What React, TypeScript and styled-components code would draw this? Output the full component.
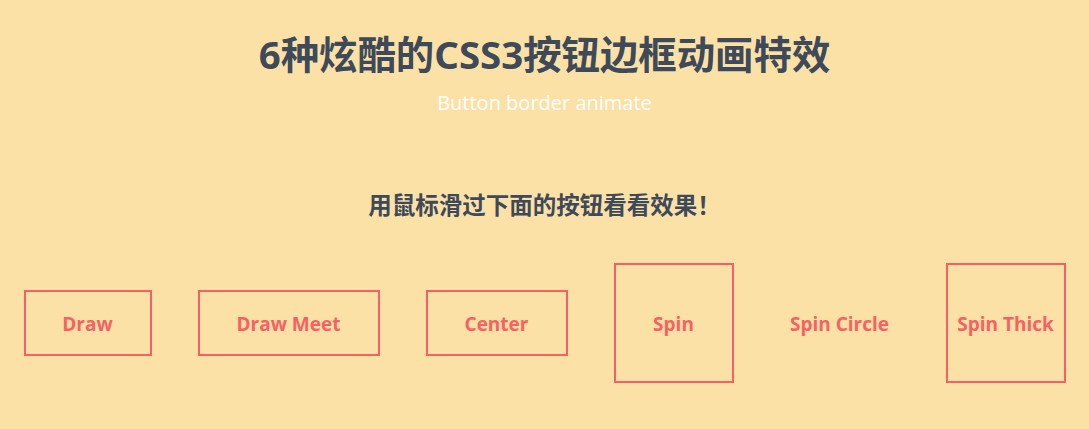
import React from "react";
import styled, { createGlobalStyle } from "styled-components";

const GlobalStyle = createGlobalStyle`
  html, body {
    margin: 0;
    padding: 0;
    background: #fce1a6;
  }
  body {
    font-family: "Open Sans", "Noto Sans CJK SC", sans-serif;
  }
`;

const Page = styled.div`
  display: flex;
  flex-direction: column;
  align-items: center;
  min-height: 429px;
  box-sizing: border-box;
  padding-top: 29px;
`;

const Title = styled.h1`
  margin: 0;
  font-family: "Noto Sans", "Noto Sans CJK SC", sans-serif;
  font-size: 38.4px;
  line-height: 50px;
  font-weight: 700;
  color: #3e4a59;
`;

const Subtitle = styled.p`
  margin: 11px 0 0;
  font-family: "Open Sans", sans-serif;
  font-size: 20px;
  line-height: 26px;
  font-weight: 400;
  color: #ffffff;
`;

const Hint = styled.h2`
  margin: 73px 0 0;
  font-family: "Noto Sans", "Noto Sans CJK SC", sans-serif;
  font-size: 23.5px;
  line-height: 32px;
  font-weight: 700;
  color: #3e4a59;
`;

const ButtonRow = styled.div`
  display: flex;
  align-items: center;
  justify-content: center;
  gap: 46px;
  margin-top: 42px;
`;

const Button = styled.button<{ $w: number; $h: number; $bordered?: boolean }>`
  box-sizing: border-box;
  width: ${(p) => p.$w}px;
  height: ${(p) => p.$h}px;
  display: flex;
  align-items: center;
  justify-content: center;
  padding: 2px 0 0;
  background: transparent;
  border: 2px solid ${(p) => (p.$bordered === false ? "transparent" : "#f86163")};
  color: #f86163;
  font-family: "Open Sans", sans-serif;
  font-size: 19px;
  font-weight: 700;
  cursor: pointer;
`;

const buttons = [
  { label: "Draw", w: 128, h: 66 },
  { label: "Draw Meet", w: 182, h: 66 },
  { label: "Center", w: 142, h: 66 },
  { label: "Spin", w: 120, h: 120 },
  { label: "Spin Circle", w: 120, h: 120, bordered: false },
  { label: "Spin Thick", w: 120, h: 120 },
];

export default function App() {
  return (
    <>
      <GlobalStyle />
      <Page>
        <Title>6种炫酷的CSS3按钮边框动画特效</Title>
        <Subtitle>Button border animate</Subtitle>
        <Hint>用鼠标滑过下面的按钮看看效果！</Hint>
        <ButtonRow>
          {buttons.map((b) => (
            <Button key={b.label} $w={b.w} $h={b.h} $bordered={b.bordered}>
              {b.label}
            </Button>
          ))}
        </ButtonRow>
      </Page>
    </>
  );
}
